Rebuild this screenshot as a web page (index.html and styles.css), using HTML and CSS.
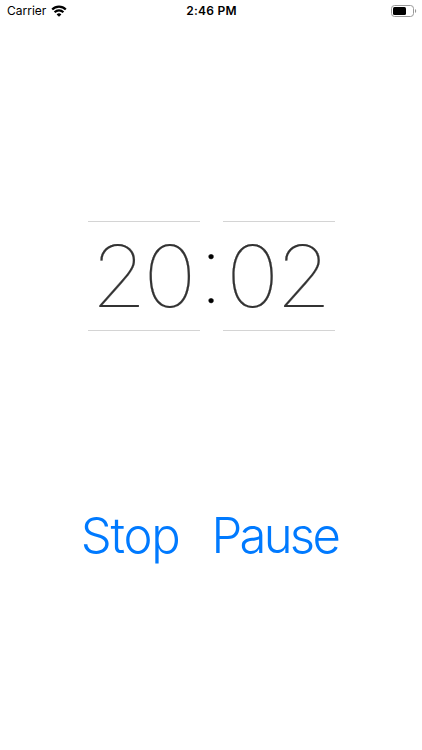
FILE: index.html
```html
<!DOCTYPE html>
<html lang="en">

<head>
	<meta charset="UTF-8">
	<meta name="viewport" content="width=device-width, initial-scale=1.0">
	<title>Timer</title>
	<link rel="stylesheet" href="styles.css">
</head>

<body>

	<!-- Status bar -->
	<header class="status-bar">
		<div class="carrier">
			<span>Carrier</span>
			<svg class="wifi" viewBox="0 0 16 12" aria-hidden="true">
				<path d="M1.2 4.5a9.6 9.6 0 0 1 13.6 0M3.6 7.2a6.2 6.2 0 0 1 8.8 0" fill="none" stroke="#000" stroke-width="2.2" />
				<path d="M8 11.8 5.6 9.4a3.4 3.4 0 0 1 4.8 0z" />
			</svg>
		</div>
		<time class="clock">2:46 PM</time>
		<svg class="battery" viewBox="0 0 26 12" aria-hidden="true">
			<rect x=".5" y=".5" width="22" height="11" rx="3" fill="none" stroke="#999" />
			<rect x="2" y="2" width="13" height="8" rx="1.5" />
			<path d="M24 4v4c1.6-.6 1.6-3.4 0-4z" fill="#999" />
		</svg>
	</header>

	<!-- Timer -->
	<main class="timer">
		<div class="digits"><span>20</span></div>
		<div class="colon">:</div>
		<div class="digits"><span>02</span></div>
	</main>

	<div class="controls">
		<button class="stop">Stop</button>
		<button class="pause">Pause</button>
	</div>

</body>

</html>
```
FILE: styles.css
```css
body {
	margin: 0;
	font-family: Inter, sans-serif;
	background-color: #fff;
	color: #000;
}

.status-bar {
	display: grid;
	grid-template-columns: 1fr auto 1fr;
	align-items: center;
	height: 22px;
	padding: 0 5px 0 7px;
	font-size: 12px;
	line-height: 20px;
}

.carrier {
	display: flex;
	align-items: center;
	gap: 5px;
}

.wifi {
	width: 16px;
	height: 12px;
	margin-bottom: 1px;
}

.clock {
	margin-right: 1px;
	font-weight: 600;
	letter-spacing: 0.25px;
}

.battery {
	width: 26px;
	height: 12px;
	margin-bottom: 1px;
	justify-self: end;
}

.timer {
	display: flex;
	justify-content: center;
	margin-top: 199px;
}

.digits {
	box-sizing: border-box;
	width: 112px;
	height: 110px;
	padding-right: 2px;
	border-top: 1px solid #d4d4d4;
	border-bottom: 1px solid #d4d4d4;
	font-size: 85px;
	font-weight: 100;
	line-height: 110px;
	letter-spacing: -3.5px;
	text-align: center;
	color: #333;
	-webkit-text-stroke: 0.2px #333;
}

.digits span {
	display: inline-block;
	transform: scaleX(1.06);
}

.colon {
	display: flex;
	justify-content: center;
	width: 23px;
	height: 110px;
	font-size: 93px;
	font-weight: 100;
	line-height: 97px;
	-webkit-text-stroke: 0.3px #000;
}

.controls {
	display: flex;
	justify-content: center;
	gap: 32px;
	margin-top: 175px;
	padding-right: 3px;
}

.controls button {
	padding: 0;
	border: none;
	background: none;
	font-family: inherit;
	font-size: 49px;
	font-weight: 300;
	line-height: 60px;
	color: #007aff;
	cursor: pointer;
}

.controls .stop {
	letter-spacing: -1.3px;
}

.controls .pause {
	letter-spacing: -2.7px;
}
```
